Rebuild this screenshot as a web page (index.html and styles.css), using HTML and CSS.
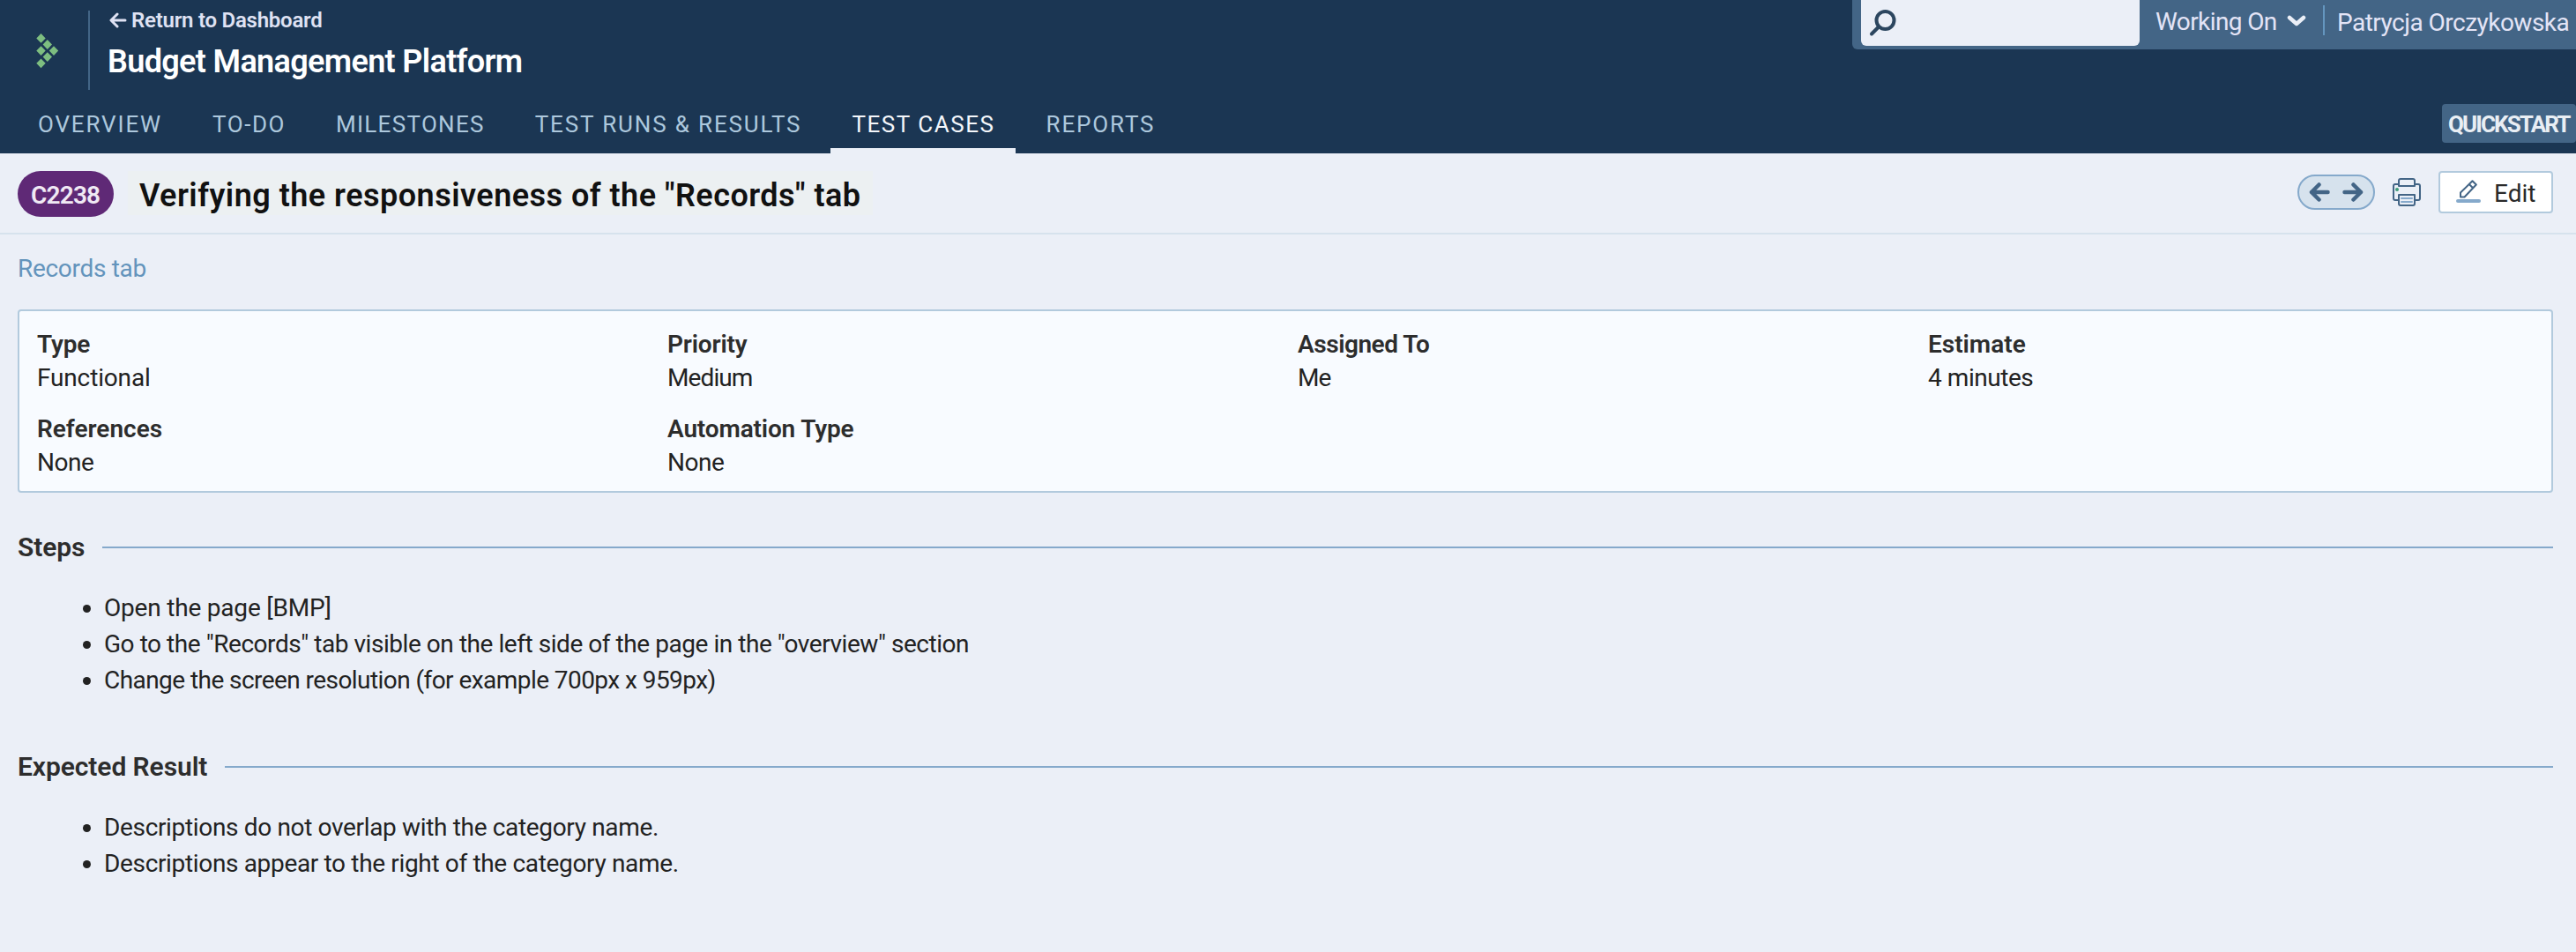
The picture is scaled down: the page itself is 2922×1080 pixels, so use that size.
FILE: index.html
```html
<!DOCTYPE html>
<html lang="en">
<head>
<meta charset="utf-8">
<title>C2238 - Budget Management Platform</title>
<link rel="stylesheet" href="styles.css">
</head>
<body>
<header class="header">
  <div class="header-top">
    <svg class="logo" viewBox="0 0 26 40" width="26" height="40"><path d="M5.500 0l5.200 5.400-5.200 5.400-5.200-5.400zM12.800 7.100l5.200 5.400-5.200 5.400-5.200-5.400zM5.500 14.200l5.200 5.400-5.200 5.400-5.200-5.400zM20 14.200l5.200 5.400-5.200 5.400-5.200-5.400zM12.800 21.200l5.200 5.400-5.200 5.400-5.200-5.400zM5.500 28.400l5.200 5.400-5.200 5.400-5.200-5.400z"/></svg>
    <div class="project">
      <a class="return"><svg width="20" height="18" viewBox="0 0 20 18"><path d="M9 2L2 9l7 7M2.500 9H18"/></svg><span>Return to Dashboard</span></a>
      <h1 class="project-name">Budget Management Platform</h1>
    </div>
    <div class="user-bar">
      <div class="search"><svg width="32" height="32" viewBox="0 0 32 32"><circle cx="18.500" cy="12" r="10"/><path d="M11 19.500L3 27.500"/></svg></div>
      <span class="working">Working On</span>
      <svg class="chevron" width="22" height="14" viewBox="0 0 22 14"><path d="M3 3l8 7 8-7"/></svg>
      <span class="user">Patrycja Orczykowska</span>
    </div>
  </div>
  <nav class="tabs">
    <a class="tab wide">OVERVIEW</a>
    <a class="tab">TO-DO</a>
    <a class="tab narrow">MILESTONES</a>
    <a class="tab wide">TEST RUNS &amp; RESULTS</a>
    <a class="tab active">TEST CASES</a>
    <a class="tab wide">REPORTS</a>
    <a class="quickstart">QUICKSTART</a>
  </nav>
</header>
<section class="title-bar">
  <span class="badge">C2238</span>
  <h2 class="title">Verifying the responsiveness of the "Records" tab</h2>
  <div class="actions">
    <span class="pager"><svg width="24" height="22" viewBox="0 0 24 22"><path d="M11.500 2.500L3 11l8.500 8.500M3 11h18.500"/></svg><svg width="24" height="22" viewBox="0 0 24 22"><path d="M12.500 2.500L21 11l-8.500 8.500M21 11H2.500"/></svg></span>
    <svg class="printer" width="32" height="32" viewBox="0 0 32 32"><path class="ink" d="M7 9V3q0-2 2-2h14q2 0 2 2v6zM7 25H3q-2 0-2-2V9q0-2 2-2h4M25 7h4q2 0 2 2v14q0 2-2 2h-4M7 19h18v10q0 2-2 2H9q-2 0-2-2z"/><path class="lines" d="M10 23h12M10 27h12"/><circle cx="5" cy="13" r="2"/></svg>
    <a class="edit"><svg width="28" height="28" viewBox="0 0 28 28"><path class="ink" d="M5 19.500v-5L18.500 1.200l4.300 4.300L9.500 19.500zM14.800 5l4.300 4.300"/><path class="base" d="M2 24h24"/></svg><span>Edit</span></a>
  </div>
</section>
<main class="content">
  <a class="section-link">Records tab</a>
  <div class="details">
    <div><b>Type</b><p>Functional</p></div>
    <div><b>Priority</b><p class="tightest">Medium</p></div>
    <div><b class="tight">Assigned To</b><p class="tightest">Me</p></div>
    <div><b class="even">Estimate</b><p class="tight">4 minutes</p></div>
    <div><b class="even">References</b><p class="tight">None</p></div>
    <div><b>Automation Type</b><p class="tight">None</p></div>
  </div>
  <h3 class="group">Steps</h3>
  <ul class="list">
    <li>Open the page [BMP]</li>
    <li class="tight">Go to the "Records" tab visible on the left side of the page in the "overview" section</li>
    <li class="tighter">Change the screen resolution (for example 700px x 959px)</li>
  </ul>
  <h3 class="group">Expected Result</h3>
  <ul class="list">
    <li class="snug">Descriptions do not overlap with the category name.</li>
    <li class="snug">Descriptions appear to the right of the category name.</li>
  </ul>
</main>
</body>
</html>
```
FILE: styles.css
```css
* { box-sizing: border-box; }
body { margin: 0; background: #ebeff7; color: #222; font: 28px/38px Roboto, sans-serif; min-height: 1080px; overflow: hidden; }
h1, h2, h3, p, ul { margin: 0; padding: 0; font-weight: 600; }
p, li { font-weight: 400; }
svg { display: block; flex: none; fill: none; stroke-linecap: round; stroke-linejoin: round; }

.header { height: 174px; background: #1b3653; }
.header-top { display: flex; height: 108px; align-items: flex-start; }
.logo { margin: 38px 33px 0 41px; fill: #7dbe80; }
.project { height: 90px; margin-top: 12px; padding-left: 22px; border-left: 2px solid #436586; white-space: nowrap; }
.return { display: flex; align-items: center; gap: 5px; height: 30px; margin-top: -4px; color: #dfe2f3; font-size: 24px; font-weight: 600; letter-spacing: -0.24px; }
.return svg { stroke: #dfe2f3; stroke-width: 3; }
.project-name { margin: 10px 0 0 -2px; color: #fff; font-size: 36px; line-height: 44px; letter-spacing: -0.65px; }
.user-bar { display: flex; flex: none; align-items: flex-start; width: 821px; height: 56px; margin-left: auto; padding-left: 10px; background: #436586; border-bottom-left-radius: 6px; color: #e3e4f6; line-height: 50px; white-space: nowrap; }
.search { flex: none; width: 316px; height: 52px; padding: 11px 9px; background: #ebeff7; border-radius: 0 0 6px 6px; }
.search svg { stroke: #2c465f; stroke-width: 4; }
.working { flex: none; width: 150px; margin-left: 18px; letter-spacing: -0.6px; }
.chevron { margin: 17px 19px 0 -1px; stroke: #ebeff7; stroke-width: 4.5; }
.user { flex: none; height: 34px; margin-top: 6px; padding-left: 14px; border-left: 2px solid #6496bf; line-height: 40px; letter-spacing: -0.52px; }

.tabs { display: flex; gap: 11px; height: 66px; padding-left: 19px; color: #adc8dd; font-size: 26px; line-height: 66px; white-space: nowrap; }
.tab { padding: 0 22px 0 24px; letter-spacing: 1.55px; }
.tab.wide { letter-spacing: 1.85px; }
.tab.narrow { letter-spacing: 1.3px; }
.tab.active { padding-right: 23px; color: #f4f7fb; box-shadow: inset 0 -6px #ebeff7; }
.quickstart { width: 152px; height: 44px; margin: 10px 0 0 auto; padding-left: 7px; background: #436586; border-radius: 4px; color: #e9eef4; font-weight: 700; line-height: 46px; letter-spacing: -1.9px; }

.title-bar { display: flex; align-items: flex-start; height: 92px; padding: 20px 26px 0 20px; border-bottom: 2px solid #d6e2ed; white-space: nowrap; }
.badge { width: 109px; height: 52px; padding-left: 15px; border-radius: 26px; background: #5f2976; color: #f0e9f4; font-weight: 600; line-height: 56px; letter-spacing: -0.8px; }
.title { width: 845px; height: 50px; margin-left: 16px; padding-left: 13px; background: #ecf0f2; color: #111; font-size: 36px; line-height: 56px; letter-spacing: 0.48px; }
.actions { display: flex; margin-left: auto; align-items: center; height: 48px; }
.pager { display: flex; align-items: center; justify-content: space-between; width: 88px; height: 40px; padding: 0 11px; border: 2px solid #85a9cb; border-radius: 20px; background: #d6e2ed; }
.pager svg { stroke: #436586; stroke-width: 4.5; }
.printer { margin: 0 20px; }
.ink { stroke: #436586; stroke-width: 2; }
.lines { stroke: #85a9cb; stroke-width: 2; }
.printer circle { fill: #3f9c78; }
.edit { display: flex; align-items: center; gap: 15px; width: 130px; height: 48px; padding-left: 18px; border: 2px solid #b2cadd; border-radius: 4px; background: #fff; color: #2a2a2a; }
.edit span { padding-top: 3px; }
.base { stroke: #85a9cb; stroke-width: 4; }

.content { padding: 18px 26px 0 20px; }
.section-link { display: block; color: #6394bc; line-height: 42px; letter-spacing: -0.3px; }
.details { display: grid; grid-template-columns: repeat(3, 715px) 1fr; row-gap: 20px; height: 208px; margin-top: 25px; padding: 19px 0 13px 20px; border: 2px solid #b2cadd; border-radius: 4px; background: #f8fbff; letter-spacing: -0.15px; }
.details b { display: inline-block; font-weight: 600; color: #2d2d2d; }
.group { display: flex; align-items: center; gap: 20px; margin-top: 42px; font-size: 30px; line-height: 40px; letter-spacing: -0.08px; color: #2d2d2d; }
.group::after { content: ""; flex: 1; height: 2px; background: #85a9cb; }
.list { margin-top: 28px; padding-left: 98px; line-height: 41px; letter-spacing: -0.2px; }
.list + .group { margin-top: 58px; }
.details .even { letter-spacing: 0; }
.snug { letter-spacing: -0.34px; }
.tight { letter-spacing: -0.45px; }
.tighter { letter-spacing: -0.56px; }
.tightest { letter-spacing: -0.9px; }
```
